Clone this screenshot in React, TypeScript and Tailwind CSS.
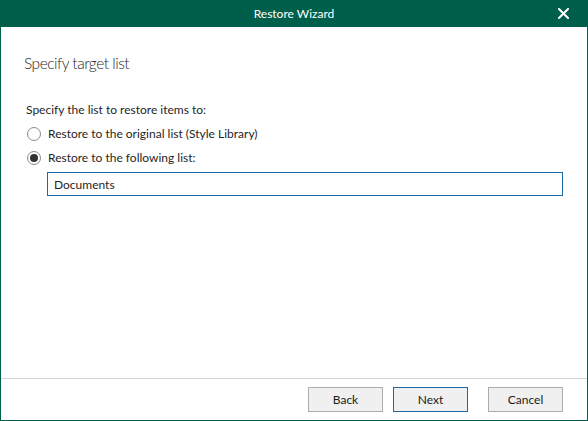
import { useState } from "react";

type RadioProps = {
  checked: boolean;
  label: string;
  onSelect: () => void;
};

function Radio({ checked, label, onSelect }: RadioProps) {
  return (
    <label className="flex h-6 items-center gap-[7px] cursor-default" onClick={onSelect}>
      <span className="flex h-[14px] w-[14px] items-center justify-center rounded-full border border-[#8a8a8a] bg-white">
        {checked && <span className="h-[8px] w-[8px] rounded-full bg-[#333333]" />}
      </span>
      <span>{label}</span>
    </label>
  );
}

function WizardButton({ label, primary, className }: { label: string; primary?: boolean; className?: string }) {
  return (
    <button
      className={
        "h-[25px] w-[75px] border bg-[#f0f0f0] text-[12px] text-[#1a1a1a] " +
        (primary ? "border-[#1a6aa8] " : "border-[#adadad] ") +
        (className ?? "")
      }
    >
      {label}
    </button>
  );
}

export default function App() {
  const [target, setTarget] = useState<"original" | "other">("other");
  const [listName, setListName] = useState("Documents");

  return (
    <div
      className="flex h-[421px] w-[588px] flex-col border-x border-b border-[#005f4b] bg-white text-[12px] text-[#1f1f1f]"
      style={{ fontFamily: 'Lato, "Noto Sans", sans-serif' }}
    >
      <div className="relative -mx-px flex h-[27px] shrink-0 items-center justify-center bg-[#005f4b] text-white">
        <span className="text-[12px]">Restore Wizard</span>
        <button className="absolute right-[19px] top-[8px] flex h-[11px] w-[11px] items-center justify-center">
          <svg viewBox="0 0 11 11" className="h-[11px] w-[11px]">
            <path d="M1 1 L10 10 M10 1 L1 10" stroke="white" strokeWidth="2" strokeLinecap="square" />
          </svg>
        </button>
      </div>

      <div className="flex flex-1 flex-col px-[23px]">
        <h1 className="mt-[25px] text-[15.5px] font-light leading-[22px] tracking-[-0.5px] text-[#262626]">
          Specify target list
        </h1>

        <p className="mt-[27px] pl-[2px] leading-[18px]">Specify the list to restore items to:</p>

        <div className="mt-[3px] flex flex-col pl-[3px]">
          <Radio
            checked={target === "original"}
            label="Restore to the original list (Style Library)"
            onSelect={() => setTarget("original")}
          />
          <Radio
            checked={target === "other"}
            label="Restore to the following list:"
            onSelect={() => setTarget("other")}
          />
        </div>

        <input
          value={listName}
          onChange={(e) => setListName(e.target.value)}
          className="mt-[2px] ml-[23px] h-[24px] w-[516px] border border-[#1a6aa8] px-[6px] outline-none"
        />
      </div>

      <div className="flex h-[42px] shrink-0 items-center justify-end gap-[10px] border-t border-[#d4d4d4] pr-[24px]">
        <WizardButton label="Back" />
        <WizardButton label="Next" primary />
        <WizardButton label="Cancel" className="ml-[10px]" />
      </div>
    </div>
  );
}
